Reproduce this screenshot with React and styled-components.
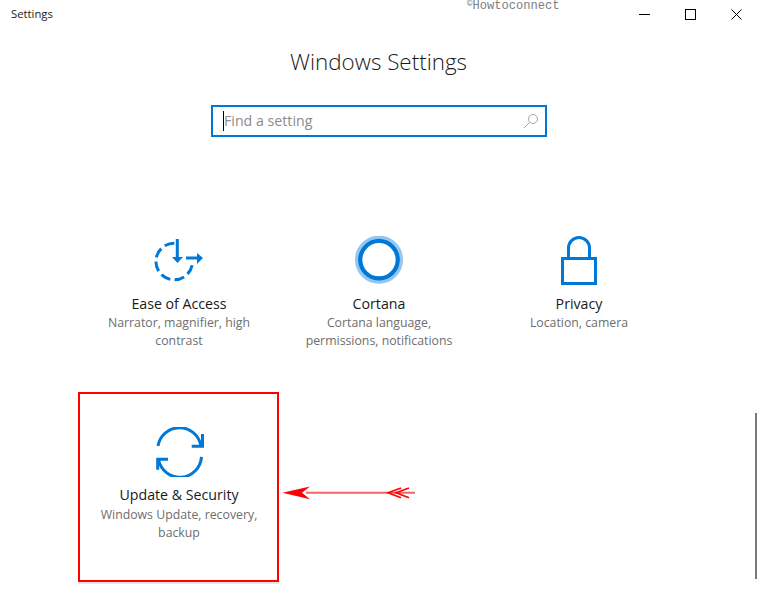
import React from "react";
import styled, { createGlobalStyle } from "styled-components";

const GlobalStyle = createGlobalStyle`
  html, body {
    margin: 0;
    padding: 0;
    background: #fff;
  }
  * {
    box-sizing: border-box;
  }
`;

const Page = styled.div`
  position: relative;
  width: 757px;
  height: 594px;
  overflow: hidden;
  background: #fff;
  font-family: "Open Sans", "Liberation Sans", sans-serif;
  color: #1a1a1a;
`;

const TitleBar = styled.header`
  display: flex;
  align-items: center;
  justify-content: space-between;
  height: 28px;
  padding-left: 11px;
  margin-right: -2px;
  font-size: 11.3px;

  > span {
    margin-top: -2px;
  }
`;

const Controls = styled.div`
  display: flex;
`;

const ControlButton = styled.div`
  display: flex;
  align-items: center;
  justify-content: center;
  width: 46px;
  height: 28px;
`;

const Watermark = styled.div`
  position: absolute;
  top: -1px;
  left: 467px;
  font-family: "Liberation Mono", monospace;
  font-size: 12.1px;
  line-height: 14px;
  color: #7d7d7d;

  sup {
    font-size: 9px;
    line-height: 0;
    vertical-align: 3px;
  }
`;

const Heading = styled.h1`
  margin: 16px 0 0;
  height: 36px;
  font-size: 22.4px;
  font-weight: 300;
  line-height: 36px;
  text-align: center;
`;

const SearchBox = styled.div`
  display: flex;
  align-items: center;
  justify-content: space-between;
  width: 336px;
  height: 32px;
  margin: 25px 0 0 211px;
  padding: 0 6px 0 10px;
  border: 2px solid #0078d7;
`;

const SearchText = styled.div`
  height: 20px;
  border-left: 1px solid #000;
  font-size: 14.2px;
  line-height: 20px;
  color: #8c8c8c;
`;

const Grid = styled.main`
  display: grid;
  grid-template-columns: repeat(3, 200px);
  grid-auto-rows: 191px;
  margin: 64px 0 0 79px;
`;

const Tile = styled.div`
  position: relative;
  display: flex;
  flex-direction: column;
  align-items: center;
  padding-top: 35px;
  text-align: center;

  ${(p) =>
    p.$marked &&
    `&::after {
      content: "";
      box-sizing: border-box;
      position: absolute;
      top: 0;
      left: -1px;
      width: 201px;
      height: 190px;
      border: 2px solid #f00;
      box-shadow: 0 2px 0 #e6e6e6;
    }`}
`;

const TileIcon = styled.svg`
  display: block;
  width: 60px;
  height: 50px;
  fill: none;
  stroke: #0078d7;
  stroke-width: 3;
`;

const TileName = styled.div`
  margin-top: 8px;
  font-size: 14.2px;
  line-height: 19px;
`;

const TileText = styled.div`
  width: 172px;
  margin-top: ${(p) => (p.$tight ? "1px" : "2px")};
  font-size: 12.3px;
  line-height: 18px;
  color: #6e6e6e;
`;

const Arrow = styled.svg`
  position: absolute;
  left: 280px;
  top: 484px;
`;

const ScrollThumb = styled.div`
  position: absolute;
  top: 413px;
  right: 0;
  width: 2px;
  height: 166px;
  background: #7a7a7a;
`;

const EaseIcon = () => (
  <TileIcon viewBox="0 0 60 50">
    <path d="M25.3 7.2A18.3 18.3 0 1 0 43.4 27.5" strokeDasharray="10 4.4" />
    <path d="M28.3 3v19" />
    <path d="M23 21h11l-5.5 6z" fill="#0078d7" stroke="none" />
    <path d="M37 22h11" />
    <path d="M48 17l6 5-6 6z" fill="#0078d7" stroke="none" />
  </TileIcon>
);

const CortanaIcon = () => (
  <TileIcon viewBox="0 0 60 50">
    <circle cx="30" cy="23.7" r="22.5" stroke="#94c6ef" />
    <circle cx="30" cy="23.7" r="18.8" strokeWidth="4.3" />
  </TileIcon>
);

const LockIcon = () => (
  <TileIcon viewBox="0 0 60 50">
    <rect x="13.5" y="22.5" width="33" height="25" />
    <path d="M19.5 22V12a10.5 10.5 0 0 1 21 0v10" />
  </TileIcon>
);

const SyncIcon = () => (
  <TileIcon viewBox="0 0 60 50">
    <path d="M9 19A21.7 21.7 0 0 1 51.7 18" />
    <path d="M53.5 7v12.2H42.7" />
    <path d="M52.5 29.8A21.7 21.7 0 0 1 9.6 33" />
    <path d="M8.7 42.7V32.3H19" />
  </TileIcon>
);

const tiles = [
  { name: "Ease of Access", text: "Narrator, magnifier, high contrast", Icon: EaseIcon, tight: true },
  { name: "Cortana", text: "Cortana language, permissions, notifications", Icon: CortanaIcon, tight: true },
  { name: "Privacy", text: "Location, camera", Icon: LockIcon, tight: true },
  { name: "Update & Security", text: "Windows Update, recovery, backup", Icon: SyncIcon, marked: true },
];

export default function App() {
  return (
    <Page>
      <GlobalStyle />
      <TitleBar>
        <span>Settings</span>
        <Controls>
          <ControlButton>
            <svg width="11" height="11" viewBox="0 0 11 11">
              <path d="M0 5.5h11" stroke="#000" />
            </svg>
          </ControlButton>
          <ControlButton>
            <svg width="11" height="11" viewBox="0 0 11 11">
              <rect x="0.5" y="0.5" width="10" height="10" fill="none" stroke="#000" />
            </svg>
          </ControlButton>
          <ControlButton>
            <svg width="11" height="11" viewBox="0 0 11 11">
              <path d="M0.5 0.5l10 10M10.5 0.5l-10 10" stroke="#000" />
            </svg>
          </ControlButton>
        </Controls>
      </TitleBar>
      <Watermark>
        <sup>©</sup>Howtoconnect
      </Watermark>
      <Heading>Windows Settings</Heading>
      <SearchBox>
        <SearchText>Find a setting</SearchText>
        <svg width="16" height="16" viewBox="0 0 16 16" fill="none" stroke="#a8a8a8">
          <circle cx="10" cy="6" r="4.5" />
          <path d="M6.8 9.2L1 15" />
        </svg>
      </SearchBox>
      <Grid>
        {tiles.map(({ name, text, Icon, marked, tight }) => (
          <Tile key={name} $marked={marked}>
            <Icon />
            <TileName>{name}</TileName>
            <TileText $tight={tight}>{text}</TileText>
          </Tile>
        ))}
      </Grid>
      <Arrow width="140" height="18" viewBox="0 0 140 18">
        <path d="M2.5 8.7L30 2.5l-8 6.2 8 6.5z" fill="#f00" />
        <path d="M26 8.7h109" stroke="#f46464" strokeWidth="2" />
        <path d="M121 4l-13 4.7 13 5M129 4l-13 4.7 13 5" fill="none" stroke="#f00" strokeWidth="1.6" />
      </Arrow>
      <ScrollThumb />
    </Page>
  );
}
